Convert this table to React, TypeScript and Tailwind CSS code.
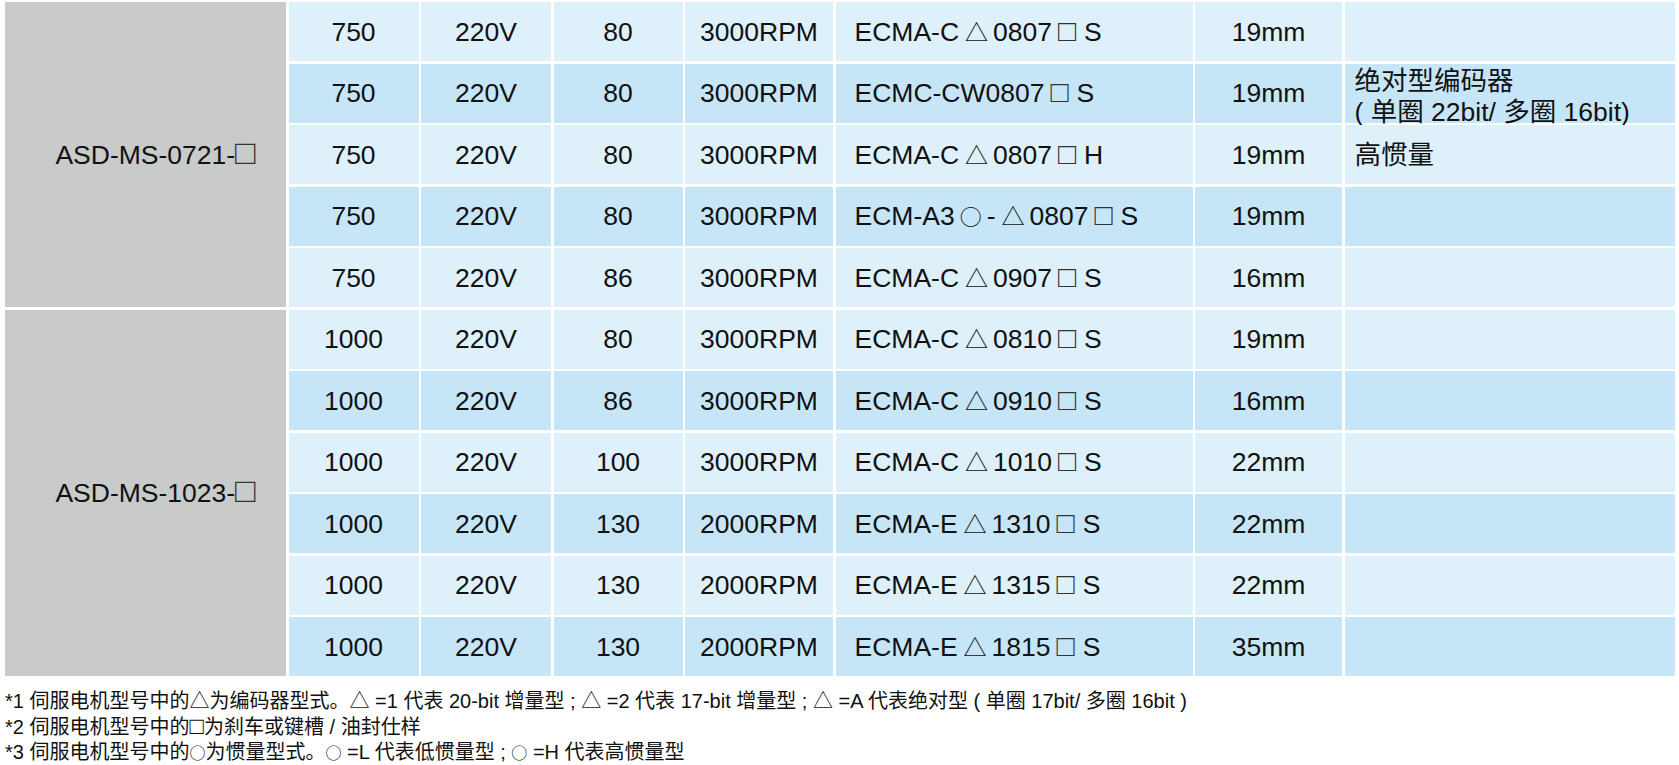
import React from 'react';

type Row = {
  power: string;
  volt: string;
  frame: string;
  speed: string;
  model: string;
  shaft: string;
};

const groups: { drive: string; rows: Row[] }[] = [
  {
    drive: 'ASD-MS-0721-□',
    rows: [
      { power: '750', volt: '220V', frame: '80', speed: '3000RPM', model: 'ECMA-C△0807□S', shaft: '19mm' },
      { power: '750', volt: '220V', frame: '80', speed: '3000RPM', model: 'ECMC-CW0807□S', shaft: '19mm' },
      { power: '750', volt: '220V', frame: '80', speed: '3000RPM', model: 'ECMA-C△0807□H', shaft: '19mm' },
      { power: '750', volt: '220V', frame: '80', speed: '3000RPM', model: 'ECM-A3○-△0807□S', shaft: '19mm' },
      { power: '750', volt: '220V', frame: '86', speed: '3000RPM', model: 'ECMA-C△0907□S', shaft: '16mm' },
    ],
  },
  {
    drive: 'ASD-MS-1023-□',
    rows: [
      { power: '1000', volt: '220V', frame: '80', speed: '3000RPM', model: 'ECMA-C△0810□S', shaft: '19mm' },
      { power: '1000', volt: '220V', frame: '86', speed: '3000RPM', model: 'ECMA-C△0910□S', shaft: '16mm' },
      { power: '1000', volt: '220V', frame: '100', speed: '3000RPM', model: 'ECMA-C△1010□S', shaft: '22mm' },
      { power: '1000', volt: '220V', frame: '130', speed: '2000RPM', model: 'ECMA-E△1310□S', shaft: '22mm' },
      { power: '1000', volt: '220V', frame: '130', speed: '2000RPM', model: 'ECMA-E△1315□S', shaft: '22mm' },
      { power: '1000', volt: '220V', frame: '130', speed: '2000RPM', model: 'ECMA-E△1815□S', shaft: '35mm' },
    ],
  },
];

// row 2 and 3 carry the remarks in the last column
const notes: Record<number, React.ReactNode> = {
  1: (
    <div className="self-start leading-[31px]">
      <div>绝对型编码器</div>
      <div>( 单圈 22bit/ 多圈 16bit)</div>
    </div>
  ),
  2: <div>高惯量</div>,
};

const font = { fontFamily: '"Liberation Sans", Arial, "Noto Sans CJK SC", sans-serif' };
const cjk = { fontFamily: '"Noto Sans CJK SC", sans-serif' };

// placeholder marks inside model numbers, spaced a little apart from the digits
function Mark({ ch, tight }: { ch: string; tight?: boolean }) {
  if (ch === '□')
    return tight ? (
      <span className="text-[34px] leading-none text-[#333]">□</span>
    ) : (
      <span className="text-[30px] leading-none text-[#333] ml-[6px] mr-[8px]">□</span>
    );
  if (ch === '○')
    return <span className="text-[22px] leading-none ml-[5px] mr-[5px]" style={cjk}>○</span>;
  return <span className="text-[23px] leading-none ml-[6px] mr-[5px]" style={cjk}>△</span>;
}

function Code({ text, tight }: { text: string; tight?: boolean }) {
  return (
    <span>
      {text.split(/([△○□])/).map((part, i) =>
        part === '△' || part === '○' || part === '□' ? <Mark key={i} ch={part} tight={tight} /> : part
      )}
    </span>
  );
}

export default function App() {
  let idx = 0;
  const cells: React.ReactNode[] = [];

  groups.forEach((g, gi) => {
    g.rows.forEach((r, ri) => {
      const i = idx++;
      const bg = ri % 2 === 0 ? 'bg-[#def0fa]' : 'bg-[#c6e6f8]';
      const cell = `${bg} flex items-center justify-center pt-[2px]`;
      if (ri === 0) {
        cells.push(
          <div
            key={`g-${gi}`}
            className={`bg-[#c9caca] flex items-center justify-center pl-[20px] pt-[2px] ${gi === 0 ? 'row-span-5' : 'row-span-6'}`}
          >
            <Code text={g.drive} tight />
          </div>
        );
      }
      cells.push(
        <div key={`${i}-p`} className={cell}>{r.power}</div>,
        <div key={`${i}-v`} className={cell}>{r.volt}</div>,
        <div key={`${i}-f`} className={cell}>{r.frame}</div>,
        <div key={`${i}-s`} className={cell}>{r.speed}</div>,
        <div key={`${i}-m`} className={`${bg} flex items-center pl-[19px] pt-[2px] whitespace-nowrap`}>
          <Code text={r.model} />
        </div>,
        <div key={`${i}-h`} className={cell}>{r.shaft}</div>,
        <div key={`${i}-n`} className={`${bg} flex items-center pl-[10px] pt-[2px] whitespace-nowrap`}>{notes[i]}</div>
      );
    });
  });

  const circle = <span className="text-[16px] leading-none" style={cjk}>○</span>;

  return (
    <div className="w-[1679px] h-[765px] bg-white text-[#111] overflow-hidden" style={font}>
      <div className="ml-[5px] mt-[2px] grid grid-cols-[281px_130px_130px_129px_148px_357px_147px_330px] grid-rows-[repeat(11,59px)] gap-[2.5px] text-[26.5px]">
        {cells}
      </div>
      <div className="ml-[5px] mt-[13px] text-[20px] leading-[25px] whitespace-nowrap">
        <div>*1 伺服电机型号中的△为编码器型式。△ =1 代表 20-bit 增量型 ; △ =2 代表 17-bit 增量型 ; △ =A 代表绝对型 ( 单圈 17bit/ 多圈 16bit )</div>
        <div>
          *2 伺服电机型号中的<span className="text-[24px] leading-none">□</span>为刹车或键槽 / 油封仕样
        </div>
        <div>
          *3 伺服电机型号中的{circle}为惯量型式。{circle} =L 代表低惯量型 ; {circle} =H 代表高惯量型
        </div>
      </div>
    </div>
  );
}
